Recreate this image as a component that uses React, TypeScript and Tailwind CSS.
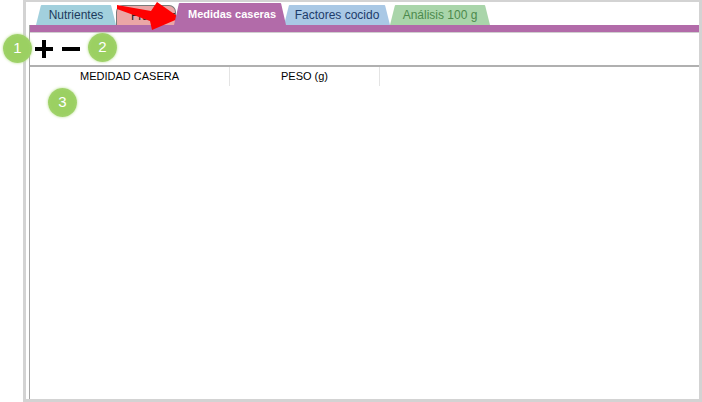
import React from "react";

type Tab = { label: string; w: string; bg: string; text: string; active?: boolean; outline?: boolean };

const tabs: Tab[] = [
  { label: "Nutrientes", w: "w-[80px]", bg: "bg-[#a2d0dd]", text: "text-[12px] text-[#1d3b5c] justify-center" },
  { label: "Fracciones", w: "w-[60px]", bg: "bg-[#eba6a6]", text: "text-[12px] text-[#222] justify-start pl-[14px]", outline: true },
  { label: "Medidas caseras", w: "w-[112px]", bg: "bg-[#b26ba9]", text: "text-[11px] text-white font-bold justify-center pl-[4px]", active: true },
  { label: "Factores cocido", w: "w-[106px]", bg: "bg-[#a9c8e5]", text: "text-[12px] text-[#1d3b6a] justify-center" },
  { label: "Análisis 100 g", w: "w-[100px]", bg: "bg-[#a9d5aa]", text: "text-[12px] text-[#4c8a4c] justify-center" },
];

function Badge({ n, className }: { n: number; className: string }) {
  return (
    <div
      className={
        "absolute w-[29px] h-[29px] rounded-full bg-[radial-gradient(circle,#9bd062_55%,#a9d67a_100%)] shadow-[0_0_3px_#b9df8f] flex items-center justify-center text-white text-[15px] " +
        className
      }
    >
      {n}
    </div>
  );
}

export default function App() {
  return (
    <div className="relative w-[702px] h-[402px] bg-white font-['Liberation_Sans',Arial,sans-serif] overflow-hidden">
      <div className="ml-[23px] h-full border-t-2 border-l-[3px] border-r-[3px] border-b-[3px] border-[#d3d3d3] flex flex-col">
        {/* tabs */}
        <div className="flex items-end h-[23px] pl-[10px] pt-[2px]">
          {tabs.map((t) => (
            <div
              key={t.label}
              className={
                "relative flex items-center overflow-hidden rounded-t-[6px] whitespace-nowrap " +
                t.w + " " + t.bg + " " + t.text + " " +
                (t.active ? "h-[22px] -mx-[2px] z-10 " : "h-[20px] ") +
                (t.outline
                  ? "border border-[#7a7a7a] border-b-0 rounded-t-[7px] "
                  : "[clip-path:polygon(5px_0,calc(100%-5px)_0,100%_100%,0_100%)]")
              }
            >
              <span>{t.label}</span>
            </div>
          ))}
        </div>

        {/* panel */}
        <div className="ml-[3px] flex-1 border-l border-[#a6a6a6] flex flex-col">
          <div className="h-[7px] bg-[#b26ba9]" />
          <div className="h-px bg-[#cfcfcf]" />
          <div className="h-[32px] flex items-center gap-[9px] pl-[5px]">
            <svg width="18" height="18" viewBox="0 0 18 18">
              <rect x="0" y="7" width="18" height="4" fill="#000" />
              <rect x="7" y="0" width="4" height="18" fill="#000" />
            </svg>
            <svg width="18" height="18" viewBox="0 0 18 18">
              <rect x="0" y="7" width="18" height="4" fill="#000" />
            </svg>
          </div>
          <div className="h-[2px] bg-[#b0b0b0]" />
          <div className="flex h-[19px] text-[11px] text-black">
            <div className="w-[200px] border-r border-[#e4e4e4] flex items-center justify-center">MEDIDAD CASERA</div>
            <div className="w-[150px] border-r border-[#e4e4e4] flex items-center justify-center">PESO (g)</div>
          </div>
          <div className="flex-1" />
        </div>
      </div>

      {/* arrow */}
      <svg className="absolute left-0 top-0" width="702" height="40" viewBox="0 0 702 40">
        <polygon points="117,5 151,11 157,2 180,18 152,30 150,21 117,9" fill="#ff0000" />
      </svg>

      <Badge n={1} className="left-[3px] top-[34px]" />
      <Badge n={2} className="left-[88px] top-[33px]" />
      <Badge n={3} className="left-[48px] top-[88px]" />
    </div>
  );
}
